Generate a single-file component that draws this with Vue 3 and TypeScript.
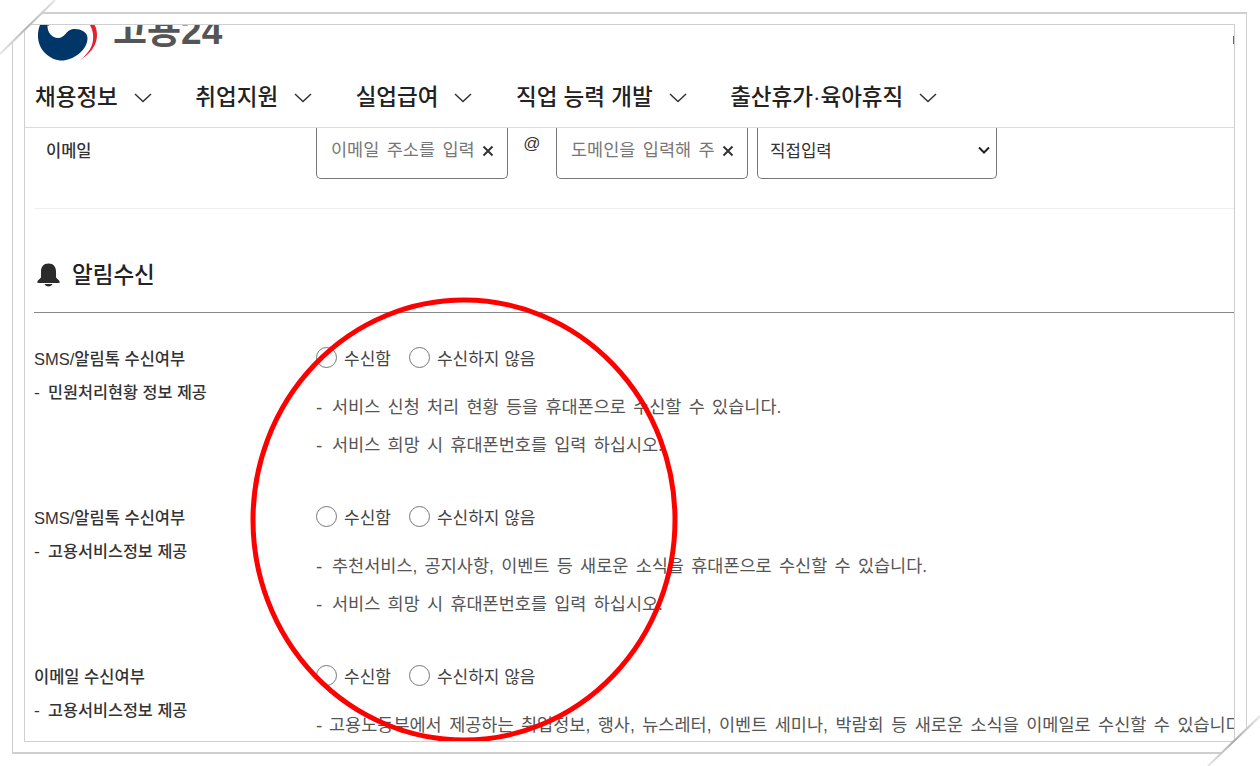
<script setup lang="ts">
interface Row { title: string; sub: string; notes: string[]; }
const nav: string[] = ['채용정보', '취업지원', '실업급여', '직업 능력 개발', '출산휴가·육아휴직'];
const rows: Row[] = [
  { title: 'SMS/알림톡 수신여부', sub: '민원처리현황 정보 제공', notes: ['서비스 신청 처리 현황 등을 휴대폰으로 수신할 수 있습니다.', '서비스 희망 시 휴대폰번호를 입력 하십시오.'] },
  { title: 'SMS/알림톡 수신여부', sub: '고용서비스정보 제공', notes: ['추천서비스, 공지사항, 이벤트 등 새로운 소식을 휴대폰으로 수신할 수 있습니다.', '서비스 희망 시 휴대폰번호를 입력 하십시오.'] },
  { title: '이메일 수신여부', sub: '고용서비스정보 제공', notes: ['고용노동부에서 제공하는 취업정보, 행사, 뉴스레터, 이벤트 세미나, 박람회 등 새로운 소식을 이메일로 수신할 수 있습니다.'] },
];
</script>

<template>
  <div class="page">
    <div class="outer">
      <div class="inner">
        <header class="header">
          <div class="logo">
            <svg class="mark" viewBox="37 26 61 37" width="61" height="37">
              <path d="M47.500 26C47 33 52 39 58 39C65 39 66 31 73 30C81 29.500 87.500 33 87.500 39C87.500 52 72 61.500 62 61.500C56 61.500 50 59 45 54C38 47 36 36 40 26z" fill="#003668" />
              <path d="M90 26C95 35 94 46 88 53C85 57 82 60 79 61.500C86 58 97 49 97 36C97 32 96 28 94.500 26z" fill="#e2232e" />
              <path d="M47 26h2v.800h-2z" fill="#e2232e" />
            </svg>
            <span class="logo-text">고용24</span>
            <i class="edge-icon"></i>
          </div>
          <nav class="nav">
            <a v-for="item in nav" :key="item" class="nav-item">
              <span>{{ item }}</span>
              <svg width="18" height="10" viewBox="0 0 18 10"><path d="M1 1 9 8.500 17 1" fill="none" stroke="#333" stroke-width="1.500" /></svg>
            </a>
          </nav>
        </header>
        <main class="main">
          <div class="email-row">
            <label class="label email-label">이메일</label>
            <div class="field">
              <span class="ph">이메일 주소를 입력</span>
              <svg class="x" width="12" height="12" viewBox="0 0 12 12"><path d="M1.500 1.500 10.500 10.500M10.500 1.500 1.500 10.500" stroke="#333" stroke-width="2" /></svg>
            </div>
            <span class="at">@</span>
            <div class="field">
              <span class="ph">도메인을 입력해 주</span>
              <svg class="x" width="12" height="12" viewBox="0 0 12 12"><path d="M1.500 1.500 10.500 10.500M10.500 1.500 1.500 10.500" stroke="#333" stroke-width="2" /></svg>
            </div>
            <div class="field select">
              <span>직접입력</span>
              <svg width="12" height="8" viewBox="0 0 12 8"><path d="M1 1.500 6 6.500l5-5" fill="none" stroke="#222" stroke-width="2" /></svg>
            </div>
          </div>
          <h2 class="title">
            <svg width="25" height="25" viewBox="0 0 25 25"><path d="M12.500 1.500c-5 0-7.500 3.500-7.500 8v6L1.500 19v2h22v-2L20 15.500v-6c0-4.500-2.500-8-7.500-8zM8.500 22h8c-.5 1.500-2.300 2.500-4 2.500s-3.500-1-4-2.500z" fill="#2b2b2b" /></svg>
            <span>알림수신</span>
          </h2>
          <section v-for="(row, i) in rows" :key="i" class="row">
            <div class="label-col">
              <div class="label">{{ row.title }}</div>
              <div class="label sub"><span class="dash">-</span>{{ row.sub }}</div>
            </div>
            <div class="value-col">
              <div class="radios">
                <label class="radio"><i class="dot"></i>수신함</label>
                <label class="radio"><i class="dot"></i>수신하지 않음</label>
              </div>
              <div class="notes">
                <p v-for="n in row.notes" :key="n" class="note" :class="{ tight: i === 2 }"><span class="dash">-</span>{{ n }}</p>
              </div>
            </div>
          </section>
        </main>
        <svg class="circle" width="1210" height="716" viewBox="25 26 1210 716">
          <ellipse cx="464" cy="521" rx="211" ry="220" fill="none" stroke="#fe0000" stroke-width="5" />
        </svg>
      </div>
    </div>
    <svg class="fold" width="1260" height="766" viewBox="0 0 1260 766">
      <defs>
        <linearGradient id="foldA" gradientUnits="userSpaceOnUse" x1="55" y1="0" x2="0" y2="54">
          <stop offset="0" stop-color="#e4e4e4" /><stop offset="0.5" stop-color="#b4b4b4" /><stop offset="1" stop-color="#e8e8e8" />
        </linearGradient>
        <linearGradient id="foldB" gradientUnits="userSpaceOnUse" x1="1260" y1="716" x2="1208" y2="766">
          <stop offset="0" stop-color="#e8e8e8" /><stop offset="0.5" stop-color="#a8a8a8" /><stop offset="1" stop-color="#e8e8e8" />
        </linearGradient>
      </defs>
      <path d="M0 0H55L0 54z" fill="#fff" />
      <path d="M55 0 0 54" stroke="url(#foldA)" stroke-width="2" />
      <path d="M1260 766H1208L1260 716z" fill="#fff" />
      <path d="M1260 716 1208 766" stroke="url(#foldB)" stroke-width="2" />
    </svg>
  </div>
</template>

<style>
html, body { margin: 0; background: #fff; }
</style>

<style scoped>
.page {
  position: relative;
  width: 1260px;
  height: 766px;
  box-sizing: border-box;
  padding: 12px 13px 12px 12px;
  overflow: hidden;
  background: #fff;
  font-family: "Liberation Sans", "Noto Sans CJK KR", sans-serif;
}
.outer {
  height: 100%;
  box-sizing: border-box;
  border: 2px solid #cfcfcf;
  border-width: 2px 1px 2px 1px;
  padding: 10px 11px;
}
.inner {
  position: relative;
  height: 100%;
  box-sizing: border-box;
  border: 1px solid #cfcfcf;
  overflow: hidden;
}
.header {
  height: 102px;
  border-bottom: 1px solid #dcdcdc;
  padding-left: 12px;
}
.logo {
  height: 42px;
  display: flex;
  align-items: flex-start;
  overflow: hidden;
}
.mark { flex: none; }
.logo-text {
  font-size: 37px;
  font-weight: 700;
  line-height: 42px;
  color: #555;
  margin: -14px 0 0 15px;
}
.edge-icon {
  margin: 11px 0 0 auto;
  width: 1px;
  height: 8px;
  background: #666;
}
.nav {
  display: flex;
  gap: 43.500px;
  height: 58px;
  box-sizing: border-box;
  padding-top: 4px;
  align-items: center;
  margin-left: -2px;
}
.nav-item {
  display: flex;
  align-items: center;
  gap: 16px;
  font-size: 22.500px;
  font-weight: 500;
  color: #222;
  line-height: 30px;
}
.main {
  padding-left: 9px;
  width: 1200px;
}
.email-row {
  display: flex;
  align-items: flex-start;
  height: 80px;
  border-bottom: 1px solid #efefef;
}
.email-label {
  width: 282px;
  padding: 10px 0 0 12px;
  box-sizing: border-box;
}
.field {
  width: 192px;
  height: 51px;
  box-sizing: border-box;
  border: 1px solid #777;
  border-top: none;
  border-radius: 0 0 5px 5px;
  display: flex;
  align-items: flex-start;
  padding: 9px 13px 0 14px;
  font-size: 17.500px;
  word-spacing: 2.600px;
  line-height: 26px;
  white-space: nowrap;
  overflow: hidden;
}
.ph { color: #777; flex: 1; overflow: hidden; }
.x { margin-top: 8px; flex: none; }
.at {
  width: 48px;
  text-align: center;
  font-size: 17px;
  line-height: 24px;
  padding-top: 4px;
  color: #333;
}
.select {
  width: 240px;
  margin-left: 9px;
  padding: 11px 6px 0 12px;
  color: #333;
  font-size: 16.800px;
  justify-content: space-between;
}
.select svg { margin-top: 7px; }
.title {
  margin: 0;
  height: 104px;
  box-sizing: border-box;
  padding-top: 51px;
  border-bottom: 1px solid #888;
  display: flex;
  align-items: flex-start;
  gap: 11px;
  font-size: 22.500px;
  font-weight: 500;
  line-height: 32px;
  color: #222;
}
.title svg { margin: 2px 0 0 2px; }
.row {
  display: flex;
  height: 159px;
  box-sizing: border-box;
  padding-top: 32px;
}
.label-col { width: 282px; flex: none; padding-top: 1px; }
.label {
  font-size: 16.500px;
  font-weight: 500;
  line-height: 26px;
  color: #333;
}
.sub { margin-top: 7px; font-size: 16.300px; }
.sub .dash { width: 14px; }
.dash { display: inline-block; font-family: "DejaVu Sans", sans-serif; }
.value-col { flex: 1; white-space: nowrap; }
.radios { display: flex; gap: 18px; height: 26px; padding-top: 2px; }
.radio {
  display: flex;
  align-items: center;
  gap: 7px;
  font-size: 17px;
  line-height: 26px;
  color: #444;
}
.dot {
  width: 21px;
  height: 21px;
  margin-top: -6px;
  box-sizing: border-box;
  border: 1px solid #777;
  border-radius: 50%;
  background: #fff;
}
.notes { padding-top: 9px; }
.note {
  margin: 12px 0 0;
  font-size: 17.500px;
  word-spacing: 2.400px;
  line-height: 26px;
  color: #555;
}
.note .dash { width: 16px; }
.note.tight { word-spacing: 2.600px; }
.note.tight .dash { width: 13px; }
.circle, .fold {
  position: absolute;
  left: 0;
  top: 0;
  pointer-events: none;
}
</style>
